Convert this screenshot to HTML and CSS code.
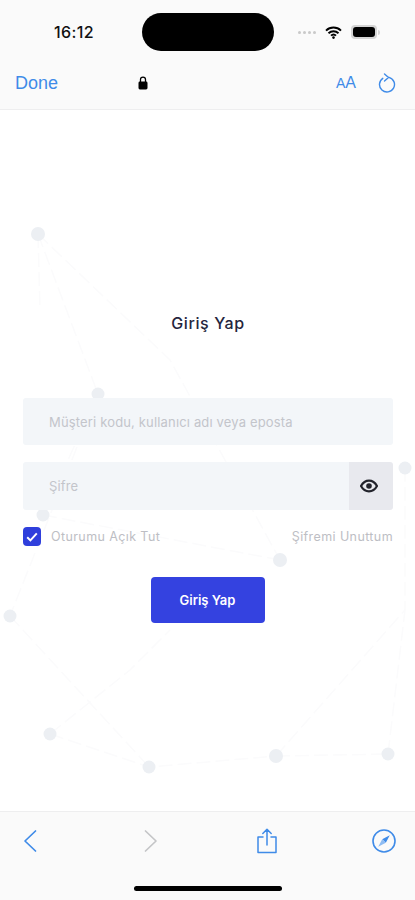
FILE: index.html
```html
<!DOCTYPE html>
<html lang="tr">
<head>
    <meta charset="UTF-8">
    <meta name="viewport" content="width=device-width, initial-scale=1.0">
    <title>Giriş Yap</title>
    <link rel="stylesheet" href="styles.css">
</head>
<body>
    <div class="phone">
        <header class="browser-top">
            <div class="status-bar">
                <span class="time">16:12</span>
                <div class="island"></div>
                <div class="signal"><i></i><i></i><i></i><i></i></div>
                <svg class="wifi" width="17" height="13" viewBox="0 0 17 13">
                    <path d="M1 4.600a10.800 10.800 0 0 1 15 0M3.500 7.200a7.200 7.200 0 0 1 10 0M6 9.600a3.600 3.600 0 0 1 5 0" fill="none" stroke="#000" stroke-width="1.900"/>
                    <circle cx="8.500" cy="11.600" r="1.300" fill="#000"/>
                </svg>
                <div class="battery"><div class="battery-level"></div></div>
                <div class="battery-nub"></div>
            </div>
            <div class="url-bar">
                <span class="done">Done</span>
                <svg class="lock" width="10" height="14" viewBox="0 0 10 14">
                    <path d="M2.500 6V3.600a2.500 2.500 0 0 1 5 0V6" fill="none" stroke="#000" stroke-width="1.300"/>
                    <rect x="0.500" y="5.500" width="9" height="8" rx="1.400" fill="#000"/>
                </svg>
                <span class="text-size"><small>A</small>A</span>
                <svg class="reload" width="18" height="20" viewBox="0 0 18 20">
                    <path d="M11 4.300a7.500 7.500 0 1 1-6.200 1" fill="none" stroke="#3f8be8" stroke-width="1.400" stroke-linecap="round"/>
                    <path d="M6.500 1l4 3.500-4 3.500" fill="none" stroke="#3f8be8" stroke-width="1.400" stroke-linecap="round" stroke-linejoin="round"/>
                </svg>
            </div>
        </header>

        <main class="content">
            <svg class="network" width="415" height="702" viewBox="0 0 415 702">
                <g class="network-lines">
                    <path d="M38 124L40 200M38 124L98 284L43 405M38 124L170 250L280 450"/>
                    <path d="M98 284L10 506M43 405L280 450M10 506L149 657M50 624L149 657L276 646"/>
                    <path d="M50 624L130 560L170 520M276 646L388 644M276 646L405 500L405 358M388 644L405 500"/>
                </g>
                <g class="network-dots">
                    <circle cx="38" cy="124" r="7"/>
                    <circle cx="98" cy="284" r="6.500"/>
                    <circle cx="43" cy="405" r="6.500"/>
                    <circle cx="10" cy="506" r="6.500"/>
                    <circle cx="50" cy="624" r="6.500"/>
                    <circle cx="149" cy="657" r="6.500"/>
                    <circle cx="276" cy="646" r="7"/>
                    <circle cx="388" cy="644" r="6.500"/>
                    <circle cx="405" cy="358" r="6.500"/>
                    <circle cx="280" cy="450" r="7"/>
                </g>
            </svg>

            <form class="login-form">
                <h1 class="title">Giriş Yap</h1>
                <input class="field" type="text" placeholder="Müşteri kodu, kullanıcı adı veya eposta">
                <div class="password-group">
                    <input class="field field-password" type="password" placeholder="Şifre">
                    <div class="eye-button">
                        <svg width="18" height="14" viewBox="0 0 18 14">
                            <path d="M1 7c2-3.600 4.800-5.400 8-5.400s6 1.800 8 5.400c-2 3.600-4.800 5.400-8 5.400S3 10.600 1 7z" fill="none" stroke="#22232b" stroke-width="2.200"/>
                            <circle cx="9" cy="7" r="2.800" fill="#22232b"/>
                        </svg>
                    </div>
                </div>
                <div class="options">
                    <label class="remember">
                        <span class="checkbox">
                            <svg width="12" height="10" viewBox="0 0 12 10">
                                <path d="M1.200 5.200l3.200 3.200 6.400-7" fill="none" stroke="#fff" stroke-width="2"/>
                            </svg>
                        </span>
                        Oturumu Açık Tut
                    </label>
                    <span class="forgot">Şifremi Unuttum</span>
                </div>
                <button class="submit" type="button">Giriş Yap</button>
            </form>
        </main>

        <footer class="browser-bottom">
            <div class="toolbar">
                <svg class="tool" width="24" height="26" viewBox="0 0 24 26">
                    <path d="M17.500 3L7 13l10.500 10" fill="none" stroke="#3f8be8" stroke-width="1.700" stroke-linecap="round" stroke-linejoin="round"/>
                </svg>
                <svg class="tool tool-forward" width="24" height="26" viewBox="0 0 24 26">
                    <path d="M6.500 3L17 13 6.500 23" fill="none" stroke="#c4c5c7" stroke-width="1.700" stroke-linecap="round" stroke-linejoin="round"/>
                </svg>
                <svg class="tool" width="24" height="26" viewBox="0 0 24 26">
                    <path d="M8 9H3v15.500h18V9h-5M12 17V1.500M7.800 5.500L12 1.300l4.200 4.200" fill="none" stroke="#3f8be8" stroke-width="1.500" stroke-linecap="round" stroke-linejoin="round"/>
                </svg>
                <svg class="tool" width="24" height="26" viewBox="0 0 24 26">
                    <circle cx="12" cy="13" r="11" fill="none" stroke="#3f8be8" stroke-width="1.600"/>
                    <path d="M17.800 7.200L13.800 14.800 10.200 11.200z" fill="#3f8be8"/>
                    <path d="M6.200 18.800L10.200 11.200 13.800 14.800z" fill="#8fbcf2"/>
                </svg>
            </div>
            <div class="home-bar"></div>
        </footer>
    </div>
</body>
</html>
```

FILE: styles.css
```css
* { margin: 0; padding: 0; box-sizing: border-box; }
body {
    font-family: Inter, 'Liberation Sans', sans-serif;
    background: white;
}
.phone {
    width: 415px;
    height: 900px;
    display: flex;
    flex-direction: column;
    overflow: hidden;
}

/* Barra superiore */
.browser-top {
    height: 110px;
    padding-top: 13px;
    background: #fafafa;
    border-bottom: 1px solid #eeeeef;
}
.status-bar {
    display: flex;
    align-items: center;
    height: 38px;
    padding-left: 54px;
}
.time {
    width: 88px;
    font-size: 16px;
    font-weight: 500;
    letter-spacing: 0.4px;
    color: #111;
}
.island {
    width: 132px;
    height: 38px;
    border-radius: 19px;
    background: #000;
    margin-right: 24px;
}
.signal {
    display: flex;
    gap: 2px;
    margin-right: 9px;
}
.signal i {
    width: 3px;
    height: 3px;
    border-radius: 50%;
    background: #c9c9c9;
}
.wifi { margin-right: 9px; }
.battery {
    width: 26px;
    height: 14px;
    padding: 2px;
    border-radius: 4px;
    background: #d4d4d4;
}
.battery-level {
    width: 22px;
    height: 10px;
    border-radius: 3px;
    background: #000;
}
.battery-nub {
    width: 2px;
    height: 5px;
    margin-left: 1px;
    border-radius: 0 2px 2px 0;
    background: #d4d4d4;
}
.url-bar {
    display: flex;
    align-items: center;
    height: 26px;
    margin-top: 19px;
    padding-left: 15px;
}
.done {
    width: 123px;
    font-family: 'Liberation Sans', sans-serif;
    font-size: 18px;
    color: #3f8be8;
}
.lock { margin-right: 188px; }
.text-size {
    width: 42px;
    font-family: 'Liberation Sans', sans-serif;
    font-size: 16px;
    color: #3f8be8;
}
.text-size small { font-size: 14px; }

/* Contenuto */
.content {
    flex: 1;
    position: relative;
    background: #fff;
}
.network {
    position: absolute;
    left: 0;
    top: 0;
}
.network-lines path {
    fill: none;
    stroke: #fbfbfc;
    stroke-width: 1.500;
    stroke-dasharray: 14 5;
}
.network-dots circle { fill: #eceff3; }
.login-form {
    position: relative;
    display: flex;
    flex-direction: column;
    padding: 201px 22px 0 23px;
}
.title {
    height: 24px;
    margin-bottom: 63px;
    font-size: 16px;
    line-height: 24px;
    font-weight: 500;
    letter-spacing: 0.6px;
    text-align: center;
    color: #25253d;
}
.field {
    width: 100%;
    height: 47px;
    padding: 0 26px;
    border: none;
    border-radius: 3px;
    outline: none;
    background: #f3f6f9;
    font-family: Inter, sans-serif;
    font-size: 13px;
    letter-spacing: 0.16px;
}
.field::placeholder { color: #c3c5cb; }
.password-group {
    display: flex;
    height: 48px;
    margin-top: 17px;
}
.field-password {
    flex: 1;
    height: 48px;
    border-radius: 3px 0 0 3px;
}
.eye-button {
    display: flex;
    align-items: center;
    justify-content: center;
    width: 44px;
    padding-right: 5px;
    border-radius: 0 3px 3px 0;
    background: #e8e9ee;
}
.options {
    display: flex;
    justify-content: space-between;
    align-items: center;
    height: 19px;
    margin-top: 17px;
    font-size: 12.500px;
    letter-spacing: 0.4px;
    color: #bdbec4;
}
.remember {
    display: flex;
    align-items: center;
    gap: 10px;
}
.checkbox {
    display: flex;
    align-items: center;
    justify-content: center;
    width: 18px;
    height: 19px;
    border-radius: 4px;
    background: #2f3fdc;
}
.submit {
    align-self: center;
    width: 114px;
    height: 46px;
    margin: 31px 0 0 -1px;
    border: none;
    border-radius: 4px;
    background: #3442e0;
    color: #fff;
    font-family: Inter, sans-serif;
    font-size: 13px;
    font-weight: 600;
}

/* Barra inferiore */
.browser-bottom {
    height: 89px;
    background: #fafafa;
    border-top: 1px solid #eeeeef;
}
.toolbar {
    display: flex;
    justify-content: space-between;
    height: 74px;
    padding: 16px 19px 0 18px;
}
.tool-forward { margin-left: 4px; }
.home-bar {
    width: 148px;
    height: 5px;
    margin: 0 auto;
    border-radius: 3px;
    background: #000;
}
```
